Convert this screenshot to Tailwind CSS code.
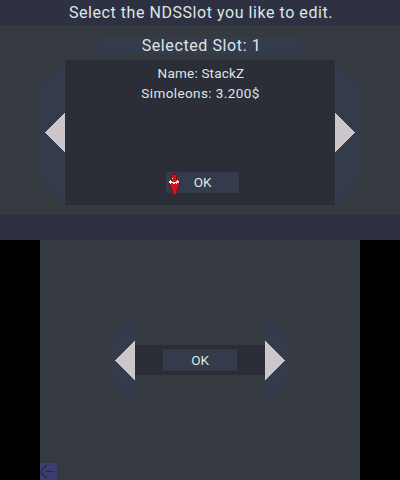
<!DOCTYPE html>
<html lang="en">
<head>
<meta charset="utf-8">
<title>NDS Slot Select</title>
<script src="https://cdn.jsdelivr.net/npm/@tailwindcss/browser@4"></script>
</head>
<body class="w-[400px] h-[480px] overflow-hidden bg-black text-[#dce6e6] font-['Roboto','Noto_Sans',sans-serif] whitespace-nowrap">
<!-- Top screen -->
<section class="flex flex-col h-[240px] bg-[#353940]">
  <header class="h-[25px] flex shrink-0 justify-center bg-[#2e3142] text-[16px] leading-[26px] tracking-[0.55px] pl-[2px]"><span>Select the NDSSlot you like to edit.</span></header>
  <div class="mt-3 h-[17px] w-[206px] shrink-0 self-center flex justify-center bg-[#343b4a] text-[16px] leading-[18px] tracking-[0.6px] pl-[3px]"><span>Selected Slot: 1</span></div>
  <div class="mt-[6px] flex justify-center">
    <svg class="block w-[25px] h-[145px]" viewBox="0 0 25 145"><path d="M25 0L0 25V121L25 145Z" fill="#343b4b"/><path d="M25 53L5 72.5L25 92Z" fill="#cdc6cb" shape-rendering="crispEdges"/></svg>
    <div class="w-[270px] h-[145px] bg-[#2b2e36] flex flex-col items-center text-[13.5px] leading-[20px] tracking-[0.4px] pt-[3px]">
      <p class="pl-[2px] tracking-[0.2px]">Name: StackZ</p>
      <p class="pl-px">Simoleons: 3.200$</p>
      <div class="relative mt-[69px] ml-[5px] w-[73px] h-[21px] bg-[#343b4a] text-center text-[13.5px] leading-[21px] tracking-[-0.2px]">OK
        <svg class="absolute left-[2px] top-[2px] w-[12px] h-[22px]" viewBox="0 0 12 22" shape-rendering="crispEdges"><path d="M3 1h1V0h4v1h1v5h2v1h1v4h-1v3h-1v3H9v3H8v2H5v-2H4v-3H3v-3H2v-3H1V7h1V5h1Z" fill="#740c15"/><path d="M4 1h4v5h3v5h-1v3H9v3H8v3H5v-3H4v-3H3v-3H2V7h2Z" fill="#cf1420"/><path d="M4 4h1v1H4zM1 7h1V6h1v1h1v1h4V7h1V6h1v1h1v2H9v1H8V9H7v1H5V9H3v1H2V9H1z" fill="#f3e9e9"/></svg>
      </div>
    </div>
    <svg class="block w-[25px] h-[145px]" viewBox="0 0 25 145"><path d="M0 0L25 25V121L0 145Z" fill="#343b4b"/><path d="M0 53L20 72.5L0 92Z" fill="#cdc6cb" shape-rendering="crispEdges"/></svg>
  </div>
  <footer class="mt-auto h-[25px] bg-[#2e3142]"></footer>
</section>
<!-- Bottom screen -->
<section class="mx-auto w-[320px] h-[240px] bg-[#353940] flex flex-col">
  <div class="mt-[75px] flex justify-center items-center">
    <svg class="block w-[25px] h-[90px]" viewBox="0 0 25 90"><path d="M25 0L0 25V65L25 90Z" fill="#343b4b"/><path d="M25 26L5 45.5L25 65Z" fill="#cdc6cb" shape-rendering="crispEdges"/></svg>
    <div class="w-[130px] h-[30px] bg-[#2b2e36] flex justify-center items-center"><div class="w-[74px] h-[22px] bg-[#343b4a] text-center text-[13.5px] leading-[22px] tracking-[-0.2px]">OK</div></div>
    <svg class="block w-[25px] h-[90px]" viewBox="0 0 25 90"><path d="M0 0L25 25V65L0 90Z" fill="#343b4b"/><path d="M0 26L20 45.5L0 65Z" fill="#cdc6cb" shape-rendering="crispEdges"/></svg>
  </div>
  <svg class="mt-auto block w-[17px] h-[17px] bg-[#3c3e70]" viewBox="0 0 17 17" fill="none" stroke="#2b2b38" shape-rendering="crispEdges"><path d="M7 1.5L1.5 7V10L7 15.5M5 8.5H14"/></svg>
</section>
</body>
</html>
